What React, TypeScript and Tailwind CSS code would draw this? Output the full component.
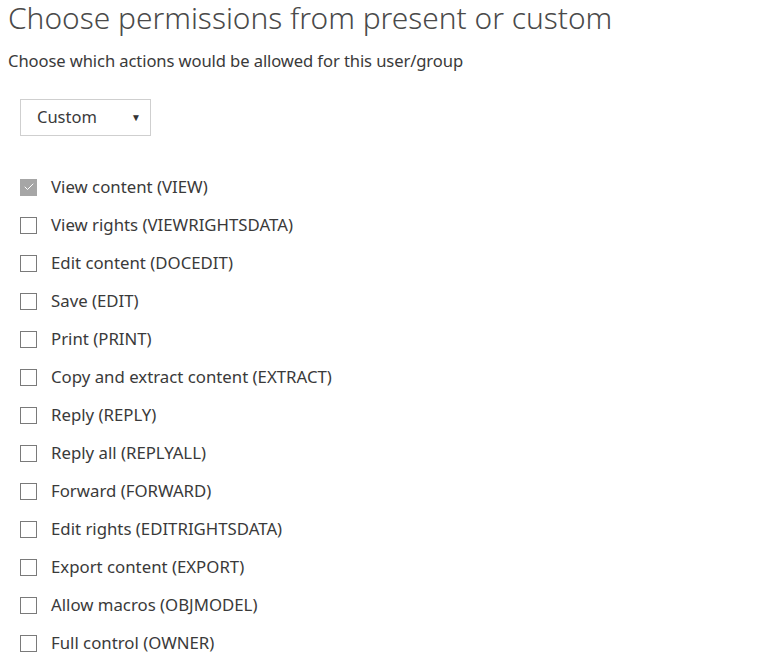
import { Check } from "lucide-react"

const permissions = [
  { label: "View content (VIEW)", checked: true },
  { label: "View rights (VIEWRIGHTSDATA)" },
  { label: "Edit content (DOCEDIT)" },
  { label: "Save (EDIT)" },
  { label: "Print (PRINT)" },
  { label: "Copy and extract content (EXTRACT)" },
  { label: "Reply (REPLY)" },
  { label: "Reply all (REPLYALL)" },
  { label: "Forward (FORWARD)" },
  { label: "Edit rights (EDITRIGHTSDATA)" },
  { label: "Export content (EXPORT)" },
  { label: "Allow macros (OBJMODEL)" },
  { label: "Full control (OWNER)" },
]

export default function App() {
  return (
    <div className="w-[765px] h-[665px] bg-white overflow-hidden font-['Noto_Sans',sans-serif] text-[#3a3a3a]">
      <h1 className="pl-2 text-[29.9px] leading-[35px] font-light text-[#4a4a4a]">
        Choose permissions from present or custom
      </h1>
      <p className="pl-2 mt-[16px] text-[16.6px] leading-5 tracking-[-0.1px]">
        Choose which actions would be allowed for this user/group
      </p>

      <div className="ml-5 mt-[28px] w-[131px] h-[37px] border border-[#cfcfcf] flex items-center justify-between pl-4 pr-[9px]">
        <span className="text-[16.5px]">Custom</span>
        <span className="text-[10px] text-[#333]">▼</span>
      </div>

      <ul className="mt-[32px] pl-5">
        {permissions.map((p) => (
          <li key={p.label} className="h-[38px] flex items-center gap-[14px]">
            {p.checked ? (
              <span className="w-[17px] h-[17px] bg-[#a6a6a6] flex items-center justify-center">
                <Check className="w-3 h-3 text-white" strokeWidth={2} />
              </span>
            ) : (
              <span className="w-[17px] h-[17px] border border-[#7a7a7a] bg-white" />
            )}
            <span className="text-[16.8px]">{p.label}</span>
          </li>
        ))}
      </ul>
    </div>
  )
}
